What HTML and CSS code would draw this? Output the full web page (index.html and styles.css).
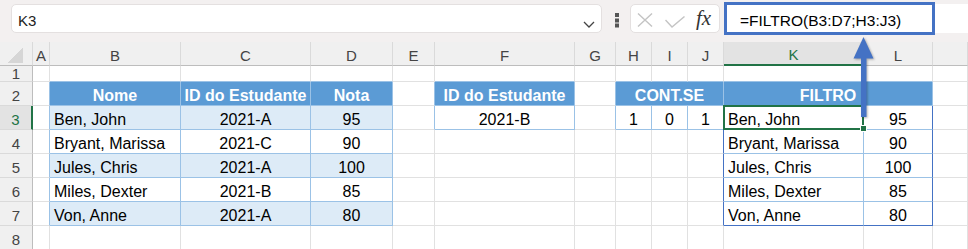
FILE: index.html
```html
<!DOCTYPE html>
<html lang="pt">
<head>
    <meta charset="UTF-8">
    <title>FILTRO</title>
    <link rel="stylesheet" href="styles.css">
</head>
<body>
    <div class="formula-bar">
        <div class="name-box">
            <span>K3</span>
            <svg class="chevron" width="12" height="7" viewBox="0 0 12 7"><path d="M1 1 L6 6 L11 1" fill="none" stroke="#444" stroke-width="1.3"/></svg>
        </div>
        <svg class="dots" width="4" height="15" viewBox="0 0 4 15">
            <rect x="0" y="0" width="4" height="4" fill="#555"/>
            <rect x="0" y="5.5" width="4" height="4" fill="#555"/>
            <rect x="0" y="10.5" width="4" height="4" fill="#555"/>
        </svg>
        <div class="fx-box">
            <svg class="cancel" width="16" height="14" viewBox="0 0 16 14"><path d="M1 0.5 L15 13.5 M15 0.5 L1 13.5" stroke="#c4c4c4" stroke-width="1.4"/></svg>
            <svg class="enter" width="20" height="12" viewBox="0 0 20 12"><path d="M0.5 4 L7 11 L19.5 0.5" fill="none" stroke="#c4c4c4" stroke-width="1.4"/></svg>
            <span class="fx">fx</span>
        </div>
        <div class="formula-input">=FILTRO(B3:D7;H3:J3)</div>
        <div class="callout"></div>
    </div>

    <table class="sheet">
        <colgroup>
            <col style="width:33px"><col style="width:17px"><col style="width:131px"><col style="width:130px">
            <col style="width:82px"><col style="width:42px"><col style="width:140px"><col style="width:41px">
            <col style="width:36px"><col style="width:36px"><col style="width:36px"><col style="width:140px">
            <col style="width:69px"><col style="width:35px">
        </colgroup>
        <tr class="col-hdr">
            <th class="corner"><span class="tri"></span></th>
            <th>A</th><th>B</th><th>C</th><th>D</th><th>E</th><th>F</th><th>G</th>
            <th>H</th><th>I</th><th>J</th><th class="sel">K</th><th>L</th><th></th>
        </tr>
        <tr class="r1">
            <th class="rh">1</th>
            <td></td><td class="tb-b"></td><td class="tb-b"></td><td class="tb-b"></td><td></td>
            <td class="tb-b"></td><td></td><td class="tb-b"></td><td class="tb-b"></td><td class="tb-b"></td>
            <td class="tb-b"></td><td class="tb-b"></td><td></td>
        </tr>
        <tr>
            <th class="rh">2</th>
            <td class="tb-r"></td>
            <td class="hd">Nome</td><td class="hd">ID do Estudante</td><td class="hd">Nota</td>
            <td class="tb-r"></td>
            <td class="hd">ID do Estudante</td>
            <td class="tb-r"></td>
            <td class="hd" colspan="3">CONT.SE</td>
            <td class="hd" colspan="2">FILTRO</td>
            <td></td>
        </tr>
        <tr>
            <th class="rh sel">3</th>
            <td class="tb-r"></td>
            <td class="band l">Ben, John</td><td class="band c">2021-A</td><td class="band c">95</td>
            <td class="tb-r"></td>
            <td class="bx c">2021-B</td>
            <td class="tb-r"></td>
            <td class="bx c">1</td><td class="bx c">0</td><td class="bx c">1</td>
            <td class="sp l active">Ben, John</td><td class="sp sp-r c">95</td>
            <td></td>
        </tr>
        <tr>
            <th class="rh">4</th>
            <td class="tb-r"></td>
            <td class="bx l">Bryant, Marissa</td><td class="bx c">2021-C</td><td class="bx c">90</td>
            <td></td><td></td><td></td><td></td><td></td>
            <td class="sp-edge"></td>
            <td class="sp l">Bryant, Marissa</td><td class="sp sp-r c">90</td>
            <td></td>
        </tr>
        <tr>
            <th class="rh">5</th>
            <td class="tb-r"></td>
            <td class="band l">Jules, Chris</td><td class="band c">2021-A</td><td class="band c">100</td>
            <td></td><td></td><td></td><td></td><td></td>
            <td class="sp-edge"></td>
            <td class="sp l">Jules, Chris</td><td class="sp sp-r c">100</td>
            <td></td>
        </tr>
        <tr>
            <th class="rh">6</th>
            <td class="tb-r"></td>
            <td class="bx l">Miles, Dexter</td><td class="bx c">2021-B</td><td class="bx c">85</td>
            <td></td><td></td><td></td><td></td><td></td>
            <td class="sp-edge"></td>
            <td class="sp l">Miles, Dexter</td><td class="sp sp-r c">85</td>
            <td></td>
        </tr>
        <tr>
            <th class="rh">7</th>
            <td class="tb-r"></td>
            <td class="band l">Von, Anne</td><td class="band c">2021-A</td><td class="band c">80</td>
            <td></td><td></td><td></td><td></td><td></td>
            <td class="sp-edge"></td>
            <td class="sp sp-b l">Von, Anne</td><td class="sp sp-r sp-b c">80</td>
            <td></td>
        </tr>
        <tr>
            <th class="rh">8</th>
            <td></td><td></td><td></td><td></td><td></td><td></td><td></td>
            <td></td><td></td><td></td><td></td><td></td><td></td>
        </tr>
    </table>

    <!-- annotation arrow from the formula to the spill cell -->
    <svg class="arrow" width="968" height="249" viewBox="0 0 968 249">
        <polygon points="863.5,37 853.5,58.5 873.5,58.5" fill="#4472c4"/>
        <rect x="861" y="57" width="5.5" height="60" fill="#4472c4"/>
    </svg>
</body>
</html>
```

FILE: styles.css
```css
body {
    margin: 0;
    width: 968px;
    height: 249px;
    overflow: hidden;
    position: relative;
    background: #fff;
    font-family: "Liberation Sans", Arial, sans-serif;
}

.formula-bar {
    height: 42px;
    box-sizing: border-box;
    padding-top: 4px;
    background: #f3f0f0;
    display: flex;
    align-items: flex-start;
}

.name-box {
    margin-left: 11px;
    width: 591px;
    height: 29px;
    box-sizing: border-box;
    padding: 3px 6px 0 6px;
    background: #fff;
    border: 1px solid #e4e0e0;
    border-radius: 5px;
    display: flex;
    align-items: flex-start;
    justify-content: space-between;
    font-size: 15px;
    line-height: 26px;
    color: #222;
}

.chevron {
    margin-top: 13px;
    margin-right: 0;
}

.dots {
    margin-left: 13px;
    margin-top: 9px;
}

.fx-box {
    margin-left: 11px;
    width: 90px;
    height: 29px;
    box-sizing: border-box;
    background: #fff;
    border: 1px solid #e4e0e0;
    border-radius: 5px;
    display: flex;
    align-items: flex-start;
    padding-left: 6px;
}

.cancel { margin-top: 8px; }
.enter { margin-top: 11px; margin-left: 12px; }

.fx {
    margin-left: 11px;
    font-family: "Liberation Serif", "Times New Roman", serif;
    font-style: italic;
    font-size: 21px;
    line-height: 26px;
    color: #333;
}

.formula-input {
    margin-left: 4px;
    flex: 1;
    height: 29px;
    box-sizing: border-box;
    padding: 4px 0 0 16px;
    background: #fff;
    font-size: 15.5px;
    line-height: 25px;
    color: #000;
}

.callout {
    position: absolute;
    left: 724px;
    top: 2px;
    width: 211px;
    height: 33px;
    box-sizing: border-box;
    border: 3px solid #4472c4;
}

.sheet {
    table-layout: fixed;
    width: 968px;
    border-collapse: separate;
    border-spacing: 0;
    font-size: 16px;
}

.sheet tr { height: 24px; }
.sheet tr.r1 { height: 16px; }

.sheet td, .sheet th {
    padding: 0;
    border-right: 1px solid #e1e1e1;
    border-bottom: 1px solid #e1e1e1;
    line-height: 19px;
    vertical-align: bottom;
    white-space: nowrap;
    color: #000;
    font-weight: normal;
}

.sheet tr.r1 td, .sheet tr.r1 th {
    height: 15px;
    line-height: 15px;
}

.col-hdr th {
    background: #f0f0f0;
    color: #444;
    font-size: 15px;
    text-align: center;
    border-right-color: #dadada;
    border-bottom-color: #bdbdbd;
}

.col-hdr th.sel {
    background: #e3e3e3;
    color: #217346;
    border-bottom: 2px solid #217346;
}

.corner { text-align: right; }

.tri {
    display: inline-block;
    width: 15px;
    height: 15px;
    margin: 0 2px 2px 0;
    vertical-align: bottom;
    background: linear-gradient(to bottom right, transparent 50%, #d6d6d6 50%);
}

.sheet th.rh {
    background: #f0f0f0;
    color: #444;
    font-size: 15px;
    text-align: center;
    border-right-color: #bdbdbd;
    border-bottom-color: #dadada;
}

.sheet th.rh.sel {
    background: #e3e3e3;
    color: #217346;
    border-right: 2px solid #217346;
}

.l { padding-left: 4px !important; text-align: left; }
.c { text-align: center; }

.sheet .tb-r { border-right-color: #9bc2e6; }
.sheet .tb-b { border-bottom-color: #9bc2e6; }
.sheet .bx { border-color: #9bc2e6; }

.sheet .hd {
    background: #5b9bd5;
    color: #fff;
    font-weight: bold;
    text-align: center;
    border-color: #9bc2e6;
}

.sheet .band {
    background: #ddebf7;
    border-color: #9bc2e6;
}

/* spill range K3:L7 */
.sheet .sp { border-color: #9bc2e6; }
.sheet .sp-r { border-right-color: #4472c4; }
.sheet .sp-b { border-bottom-color: #4472c4; }
.sheet .sp-edge { border-right-color: #4472c4; }

.active { position: relative; }

.active::before {
    content: "";
    position: absolute;
    top: -1px;
    left: -1px;
    right: -1px;
    bottom: -1px;
    border: 2px solid #217346;
}

.active::after {
    content: "";
    position: absolute;
    right: -4px;
    bottom: -3px;
    width: 5px;
    height: 5px;
    background: #217346;
    border: 1px solid #fff;
}

.arrow {
    position: absolute;
    left: 0;
    top: 0;
    pointer-events: none;
    filter: drop-shadow(1px 1px 1px rgba(0, 0, 0, 0.3));
}
```
